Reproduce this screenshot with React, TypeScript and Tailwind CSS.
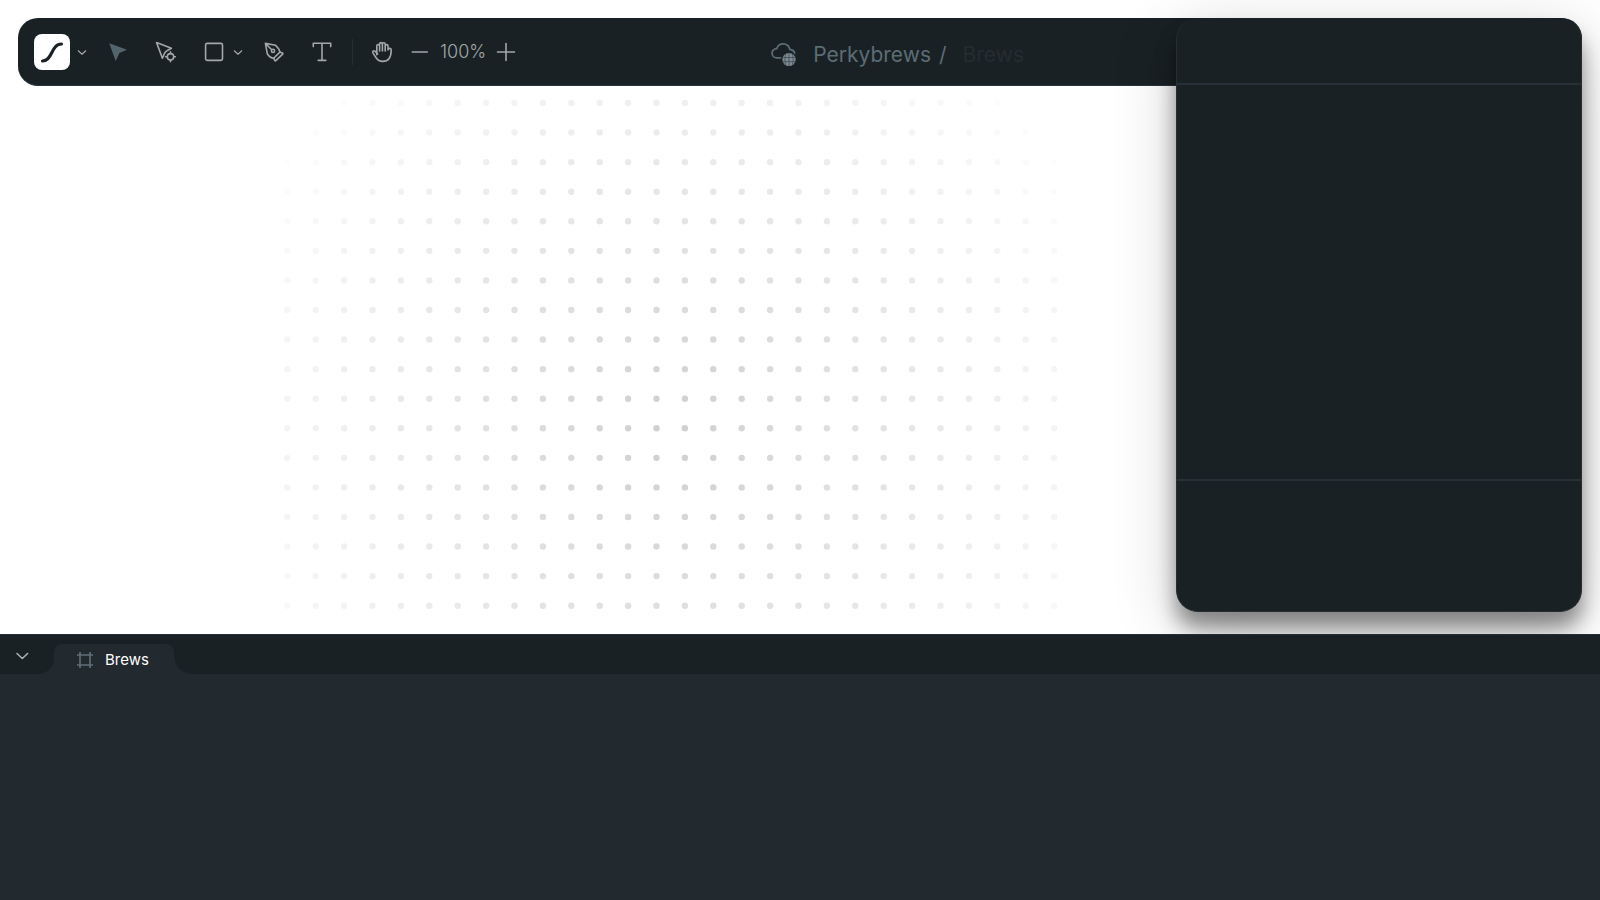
import type { ReactNode } from 'react';

const COLUMNS = 28;
const ROWS = 18;
const FADE_RADIUS = 495;

const dots = Array.from({ length: COLUMNS * ROWS }, (_, i) => {
  const x = 287.3 + (i % COLUMNS) * 28.4;
  const y = 103 + Math.floor(i / COLUMNS) * 29.57;
  const distance = Math.hypot(x - 671, y - 436);
  return { x, y, opacity: Math.max(0, 0.19 * (1 - distance / FADE_RADIUS)) };
});

function DotGrid() {
  return (
    <svg className="absolute inset-0 h-full w-full" aria-hidden="true">
      {dots.map((dot, i) => (
        <circle key={i} cx={dot.x} cy={dot.y} r="3.2" fill="#000" fillOpacity={dot.opacity} />
      ))}
    </svg>
  );
}

function Tool({ label, className = '', children }: { label: string; className?: string; children: ReactNode }) {
  return (
    <button type="button" aria-label={label} className={`shrink-0 ${className}`}>
      {children}
    </button>
  );
}

function Icon({ children }: { children: ReactNode }) {
  return (
    <svg
      className="h-6 w-6"
      viewBox="0 0 24 24"
      fill="none"
      stroke="currentColor"
      strokeWidth="1.6"
      strokeLinecap="round"
      strokeLinejoin="round"
    >
      {children}
    </svg>
  );
}

function SmallChevron() {
  return (
    <svg className="h-3 w-3" viewBox="0 0 12 12" fill="none" stroke="currentColor" strokeWidth="1.2" strokeLinecap="round" strokeLinejoin="round">
      <path d="M2.3 4.8 6 8.2l3.7-3.4" />
    </svg>
  );
}

function Logo() {
  return (
    <svg className="h-9 w-9" viewBox="0 0 36 36" fill="none">
      <rect width="36" height="36" rx="8" fill="#fff" />
      <path d="M8.5 27C18.5 27 17 10 27.5 10" stroke="#192124" strokeWidth="3.2" strokeLinecap="round" />
    </svg>
  );
}

function Toolbar() {
  return (
    <header className="z-10 col-span-full row-start-1 flex items-center rounded-[20px] border-b border-[#2b333c] bg-[#192124] pr-[406px] pl-4 text-[#a3a7a9]">
      <Tool label="Home"><Logo /></Tool>
      <Tool label="Main menu" className="ml-1.5"><SmallChevron /></Tool>
      <Tool label="Select" className="ml-[18px] text-[#53646d]">
        <Icon>
          <path d="M3.2 3.2 21 9.8l-7.6 3.3L9.7 21Z" fill="currentColor" stroke="none" />
        </Icon>
      </Tool>
      <Tool label="Edit points" className="ml-6">
        <Icon>
          <path d="M8.4 18.2 2.6 2.6 17.4 8.3M8.4 18.2l2.2-5c.8-1.7 1.6-2.3 3.2-3l3.6-1.9" />
          <circle cx="16.5" cy="16.8" r="3.2" />
          <path d="M16.5 11.9v1.7M16.5 20v1.7M11.6 16.8h1.7M19.7 16.8h1.7" />
        </Icon>
      </Tool>
      <Tool label="Rectangle" className="ml-6">
        <Icon>
          <rect x="3.6" y="3.4" width="16.9" height="17" rx="1.6" />
        </Icon>
      </Tool>
      <Tool label="Shapes" className="ml-1.5"><SmallChevron /></Tool>
      <Tool label="Pen" className="ml-[18px]">
        <Icon>
          <path d="m3.4 3.4 10.2 1.9c2.3 2.2 4 4.3 4.3 6.8l-6.3 6.1c-2.8-.3-4.7-2-6.3-4.5ZM3.8 3.8l5.9 5.9" />
          <circle cx="11" cy="10.9" r="1.6" />
          <path d="m17.9 12.3 2.5.6c.6.2.7.7.3 1.2l-6.9 6.5c-.5.4-1 .3-1.2-.3l-.7-2" />
        </Icon>
      </Tool>
      <Tool label="Text" className="ml-6">
        <Icon>
          <path d="M3.3 6.6V3.3h17.4v3.3M12 3.3v17M8.2 20.4h7.6" />
        </Icon>
      </Tool>
      <div className="ml-[18px] h-[26px] w-px bg-[#272e32]" />
      <Tool label="Pan" className="ml-[17px]">
        <Icon>
          <path d="M6.8 14.8V5.9a1.4 1.4 0 0 1 2.8 0V11V4a1.4 1.4 0 0 1 2.8 0v7V4.2a1.4 1.4 0 0 1 2.8 0V11V6a1.4 1.4 0 0 1 2.8 0v4a1.6 1.6 0 0 1 3.2 0c0 7-2.6 11.4-8.4 11.4-3.4 0-5.3-1.3-6.9-3.9l-3-4.6c-.7-1.3.8-2.7 2-1.8l2.7 2.8" />
        </Icon>
      </Tool>
      <Tool label="Zoom out" className="ml-[14px]">
        <Icon>
          <path d="M4.3 12h15" />
        </Icon>
      </Tool>
      <span className="ml-2 text-lg font-light">100%</span>
      <Tool label="Zoom in" className="ml-2">
        <Icon>
          <path d="M3.5 12h17M12 3.5v17" />
        </Icon>
      </Tool>

      <div className="mr-[152px] ml-auto flex items-center pt-1.5 text-[21px] text-[#5c6c75]">
        <svg className="mr-4 h-[26px] w-[26px]" viewBox="0 0 26 26" fill="none" stroke="currentColor" strokeWidth="1.8" strokeLinecap="round">
          <path d="M9.5 15.8H5.6a4.6 4.6 0 0 1 .1-9.2C6.9 3.4 9 1.8 12 1.8c3.7 0 6.1 2.2 6.8 5.6 2.6.3 4.3 1.5 4.9 3.5" />
          <circle cx="18" cy="17.5" r="6.6" fill="#7d8a92" stroke="none" />
          <path d="M12 15.5h12M12 19.6h12M18 11v13M14.6 12.5c-1 3.3-1 6.7 0 10M21.4 12.5c1 3.3 1 6.7 0 10" stroke="#414d54" strokeWidth=".8" />
        </svg>
        <a href="#perkybrews">Perkybrews</a>
        <span className="ml-2">/</span>
        <span className="ml-4 text-[#252c30]">Brews</span>
      </div>
    </header>
  );
}

function SidePanel() {
  return (
    <aside className="z-20 col-start-2 row-span-full row-start-1 flex flex-col rounded-[22px] border border-t-0 border-[#262e33] bg-[#192124] shadow-[0_16px_20px_rgba(0,0,0,0.4),0_16px_64px_rgba(0,0,0,0.2)]">
      <div className="h-[67px] border-b-2 border-[#283037]" />
      <div className="flex-1 border-b-2 border-[#283035]" />
      <div className="h-[130px]" />
    </aside>
  );
}

function Timeline() {
  return (
    <section className="z-30 h-[266px] bg-[#22292f]">
      <div className="flex h-10 items-end border-t border-[#262e33] bg-[#192124]">
        <button type="button" aria-label="Collapse timeline" className="mb-2 ml-3 text-[#a9b0b4]">
          <svg className="h-5 w-5" viewBox="0 0 20 20" fill="none" stroke="currentColor" strokeWidth="1.6" strokeLinecap="round" strokeLinejoin="round">
            <path d="m5 7.5 5.3 5 5.3-5" />
          </svg>
        </button>
        <svg className="ml-1.5 h-[30px] w-[18px]" viewBox="0 0 18 30" fill="#22292f">
          <path d="M0 30c10-1 15-7 16-14 .6-4 .4-7 2-10v24Z" />
        </svg>
        <div className="-ml-0.5 flex h-[30px] items-center rounded-t-lg bg-[#22292f] pt-0.5 pr-[25px] pl-[23px]">
          <svg className="h-4 w-4" viewBox="0 0 16 16" fill="none" stroke="#5f7079" strokeWidth="1.6">
            <path d="M3 0v16M13 0v16M0 3h16M0 13h16" />
          </svg>
          <a href="#brews" className="ml-3 text-[15px] text-white">Brews</a>
        </div>
        <svg className="-ml-0.5 h-[30px] w-[20px]" viewBox="0 0 20 30" fill="#22292f">
          <path d="M20 30C10 29 4 23 3 16 2.4 12 2 8 0 5v25Z" />
        </svg>
      </div>
    </section>
  );
}

export default function App() {
  return (
    <div className="flex min-h-screen flex-col overflow-hidden bg-white font-[Inter,sans-serif]">
      <main className="relative grid flex-1 grid-cols-[1fr_406px] grid-rows-[68px_1fr] px-[18px] pt-[18px] pb-[22px]">
        <DotGrid />
        <Toolbar />
        <SidePanel />
      </main>
      <Timeline />
    </div>
  );
}
